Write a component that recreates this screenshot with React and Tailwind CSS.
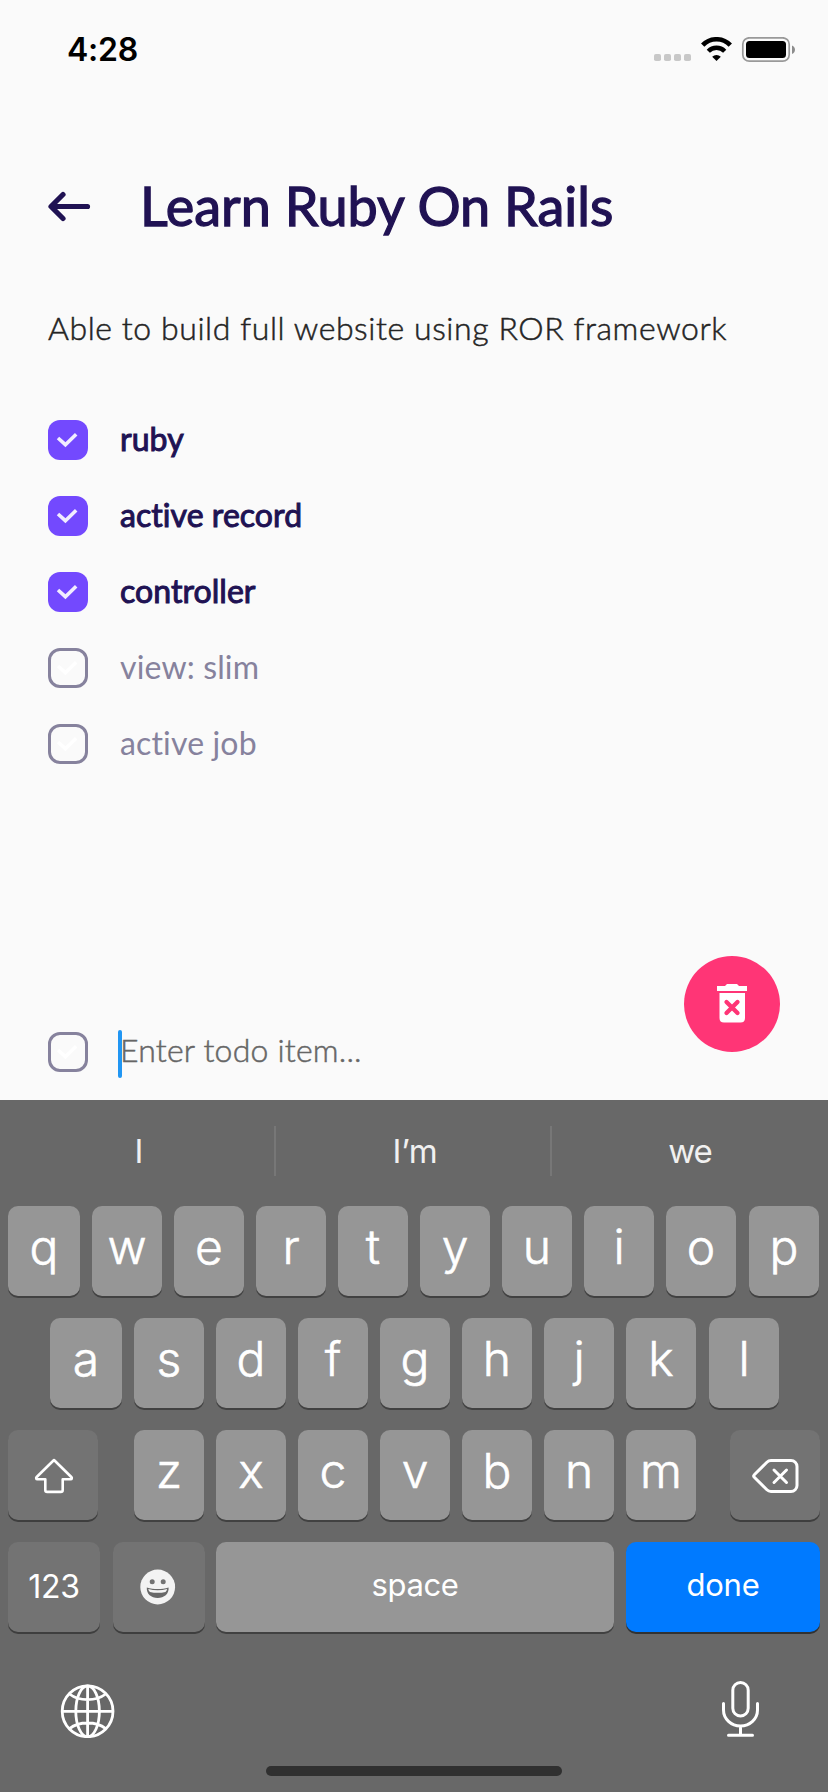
import React from "react";

const todos = [
  { label: "ruby", done: true },
  { label: "active record", done: true },
  { label: "controller", done: true },
  { label: "view: slim", done: false },
  { label: "active job", done: false },
];

function Checkbox({ checked }) {
  return (
    <span
      className={
        checked
          ? "flex size-10 shrink-0 items-center justify-center rounded-xl bg-[#7349fe]"
          : "flex size-10 shrink-0 items-center justify-center rounded-xl border-3 border-[#86829d]"
      }
    >
      <svg className="size-10 shrink-0" viewBox="0 0 40 40" fill="none">
        <path d="M10 18l7.400 6.700L28.200 14.300" stroke="#fff" strokeOpacity="0.9" strokeWidth="3.6" />
      </svg>
    </span>
  );
}

function Key({ label, first, last }) {
  return (
    <div
      className={
        (first ? "w-[72px]" : "w-[70px]") +
        (last ? " ml-px" : "") +
        " h-[90px] shrink-0 rounded-[10px] bg-[#969696] text-center text-[48px] leading-[81px] font-light shadow-[0_2px_0_#414141] [-webkit-text-stroke:0.6px_#fff]"
      }
    >
      {label}
    </div>
  );
}

function StatusBar() {
  return (
    <div className="flex h-[100px] items-start justify-between pt-[29px] pr-[33px] pl-[67px]">
      <span className="font-[Inter,sans-serif] text-[32px] leading-[42px] font-semibold tracking-[-0.2px] text-black">4:28</span>
      <svg className="mt-2 h-[26px] w-[144px]" viewBox="650 37 144 26" fill="none">
        <g fill="#c8c8c8">
          <rect x="653" y="54" width="7" height="7" rx="1.8" />
          <rect x="663" y="54" width="7" height="7" rx="1.8" />
          <rect x="673" y="54" width="7" height="7" rx="1.8" />
          <rect x="683" y="54" width="7" height="7" rx="1.8" />
        </g>
        <path d="M701.7 45.2a19 19 0 0 1 27.6 0" stroke="#000" strokeWidth="4.6" />
        <path d="M707.3 51.2a11.4 11.4 0 0 1 16.4 0" stroke="#000" strokeWidth="4.4" />
        <path d="M715.5 61l-4.3-4.3a6 6 0 0 1 8.6 0z" fill="#000" />
        <rect x="741.8" y="37.8" width="46.4" height="23.4" rx="6.5" stroke="#999" strokeWidth="1.7" />
        <rect x="745" y="41" width="40" height="17" rx="3.5" fill="#000" />
        <path d="M791 45.5c4 1.5 4 7 0 8.500z" fill="#8c8c8c" />
      </svg>
    </div>
  );
}

function Keyboard() {
  return (
    <div className="flex h-[692px] flex-col bg-[#686868] font-[Inter,sans-serif] text-white">
      <div className="flex h-[106px] shrink-0 items-start text-center text-[33px] leading-[102px] text-[#f0f0f0]">
        <span className="w-[274px] pl-1">I</span>
        <span className="mt-[26px] h-[50px] w-[2px] bg-[#777777]" />
        <span className="w-[274px] pl-1 tracking-[-0.3px]">I’m</span>
        <span className="mt-[26px] h-[50px] w-[2px] bg-[#777777]" />
        <span className="w-[276px] tracking-[-1px]">we</span>
      </div>

      <div className="flex h-[112px] shrink-0 gap-3 pl-2">
        {"qwertyuiop".split("").map((k, i) => (
          <Key key={k} label={k} first={i === 0} last={i === 9} />
        ))}
      </div>
      <div className="flex h-[112px] shrink-0 gap-3 pl-[50px]">
        {"asdfghjkl".split("").map((k, i) => (
          <Key key={k} label={k} first={i === 0} last={i === 8} />
        ))}
      </div>
      <div className="flex h-[112px] shrink-0 px-2">
        <div className="h-[90px] w-[90px] rounded-[10px] bg-[#737373] shadow-[0_2px_0_#3e3e3e]">
          <svg className="size-[90px]" viewBox="0 0 90 90" fill="none" stroke="#fff" strokeWidth="2.6" strokeLinejoin="round">
            <path d="M46 30L28.700 47c-1 1-.5 2.200.6 2.200h8V60q0 1.900 1.900 1.900h13.600q1.900 0 1.900-1.900V49.200h8c1.100 0 1.600-1.200.6-2.200z" />
          </svg>
        </div>
        <div className="ml-9 flex gap-3">
          {"zxcvbnm".split("").map((k) => (
            <Key key={k} label={k} />
          ))}
        </div>
        <div className="ml-auto h-[90px] w-[90px] rounded-[10px] bg-[#737373] shadow-[0_2px_0_#3e3e3e]">
          <svg className="size-[90px]" viewBox="0 0 90 90" fill="none" stroke="#fff" strokeWidth="3" strokeLinecap="round" strokeLinejoin="round">
            <path d="M41 30.500h20a6 6 0 0 1 6 6v19a6 6 0 0 1-6 6H41q-2.400 0-4.100-1.700L24.300 47.200q-1.200-1.200 0-2.400l12.600-12.600Q38.600 30.500 41 30.500z" />
            <path d="M44 40l12.500 12.500M56.500 40L44 52.500" />
          </svg>
        </div>
      </div>
      <div className="flex h-[112px] shrink-0 px-2 text-center">
        <div className="h-[90px] w-[92px] rounded-[10px] bg-[#737373] text-[32px] leading-[89px] tracking-[-0.2px] shadow-[0_2px_0_#3e3e3e]">123</div>
        <div className="ml-[13px] h-[90px] w-[92px] rounded-[10px] bg-[#737373] shadow-[0_2px_0_#3e3e3e]">
          <svg className="h-[90px] w-[92px]" viewBox="0 0 92 90">
            <circle cx="44.700" cy="45" r="17.400" fill="#f3f3f3" />
            <circle cx="39.200" cy="39.700" r="2.500" fill="#737373" />
            <circle cx="50.200" cy="39.700" r="2.500" fill="#737373" />
            <path d="M33.800 45.600c7 2 14.800 2 21.800 0 .500 6.500-4.500 10.400-10.900 10.400s-11.400-3.900-10.900-10.400z" fill="#686868" />
            <path d="M35.300 47c6 1.700 12.800 1.700 18.800 0-.3 1.400-.8 2.200-1.600 2.900-5 1.200-10.600 1.200-15.600 0-.8-.7-1.300-1.500-1.600-2.900z" fill="#f3f3f3" />
          </svg>
        </div>
        <div className="ml-[11px] h-[90px] w-[398px] rounded-[10px] bg-[#969696] text-[31px] leading-[85px] tracking-[-0.4px] shadow-[0_2px_0_#414141]">space</div>
        <div className="ml-3 h-[90px] w-[194px] rounded-[10px] bg-[#007aff] text-[31px] leading-[85px] tracking-[-0.2px] shadow-[0_2px_0_#323232]">done</div>
      </div>

      <div className="flex h-[112px] shrink-0 items-start justify-between pt-[26px] pr-[66px] pl-[60px]">
        <svg className="mt-[3px] size-[55px]" viewBox="60 1683 55 55" fill="none" stroke="#fff" strokeWidth="2.800">
          <circle cx="87.600" cy="1711.300" r="25.400" />
          <ellipse cx="87.600" cy="1711.300" rx="11.800" ry="25.400" />
          <path d="M87.600 1686v51M62 1711.300h51M69.500 1694c9.500 7.500 26.700 7.500 36.200 0M69.500 1728.600c9.500-7.500 26.700-7.500 36.200 0" />
        </svg>
        <svg className="h-[60px] w-[42px]" viewBox="720 1680 42 60" fill="none" stroke="#fff" strokeWidth="3" strokeLinecap="round">
          <rect x="732.800" y="1682.500" width="15.400" height="33.500" rx="7.700" />
          <path d="M723.500 1703.500v6.500a17 16 0 0 0 34 0v-6.500M740.500 1726v9M728.500 1735.300h24" />
        </svg>
      </div>
      <div className="mx-auto h-[10px] w-[296px] rounded-full bg-[#303030]" />
    </div>
  );
}

export default function App() {
  return (
    <div className="h-[1792px] w-[828px] overflow-hidden bg-[#fafafa] font-[Lato,sans-serif]">
      <div className="flex h-[1100px] flex-col">
        <StatusBar />
        <header className="flex h-[208px] shrink-0 items-center pl-12">
          <svg className="mt-1 h-8 w-[43px]" viewBox="0 0 43 32" fill="none" stroke="#201253" strokeWidth="5.200" strokeLinecap="round" strokeLinejoin="round">
            <path d="M39.500 16.500H4M15 4.500L3 16.500l12 12" />
          </svg>
          <h1 className="mt-1 ml-[49px] text-[54px] leading-[60px] font-normal tracking-[0px] whitespace-nowrap text-[#201253] [-webkit-text-stroke:1.3px_#201253]">Learn Ruby On Rails</h1>
        </header>
        <p className="h-28 shrink-0 pl-12 text-[32px] leading-[40px] font-light tracking-[0.58px] whitespace-nowrap text-[#242424] [-webkit-text-stroke:0.5px_#242424]">Able to build full website using ROR framework</p>
        <ul className="flex flex-col gap-9 pl-12">
          {todos.map((todo) => (
            <li key={todo.label} className="flex h-10 items-center gap-8">
              <Checkbox checked={todo.done} />
              <span
                className={
                  (todo.done
                    ? "tracking-[0.05px] text-[#201253] [-webkit-text-stroke:1px_#201253]"
                    : "tracking-[0.15px] text-[#86829d]") + " pb-0.5 text-[32px] leading-[36px]"
                }
              >
                {todo.label}
              </span>
            </li>
          ))}
        </ul>
        <div className="relative mt-auto flex h-[148px] items-start pt-20 pl-12">
          <Checkbox />
          <span className="mt-[-2px] ml-[30px] h-12 w-1 rounded-full bg-[#2196f3]" />
          <span className="ml-[-2px] text-[32px] leading-[36px] font-light tracking-[0.2px] text-[#666666] [-webkit-text-stroke:0.5px_#666666]">Enter todo item...</span>
          <button className="absolute top-1 right-12 flex size-24 items-center justify-center rounded-full bg-[#ff3576]" aria-label="Delete">
            <svg className="size-24" viewBox="0 0 96 96" fill="none">
              <path d="M33 30h8l2-2h10l2 2h8v5H33zM35.500 37h25.500v25q0 4.500-4.500 4.500H40q-4.500 0-4.500-4.500z" fill="#fff" />
              <path d="M42.500 46l11 11M53.500 46l-11 11" stroke="#ff3576" strokeWidth="4.300" strokeLinecap="round" />
            </svg>
          </button>
        </div>
      </div>
      <Keyboard />
    </div>
  );
}
